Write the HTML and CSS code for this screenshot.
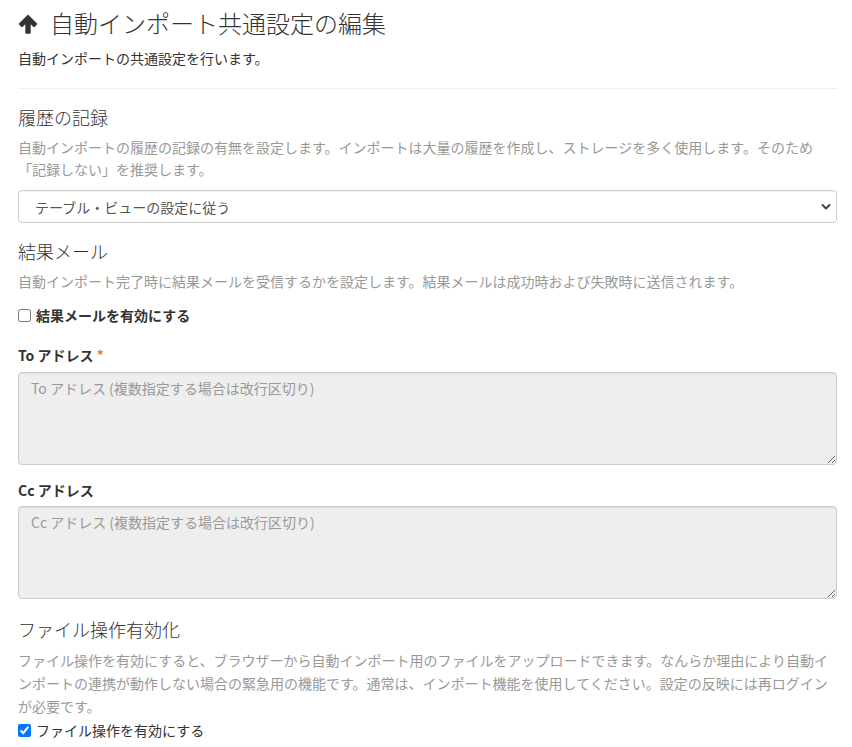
FILE: index.html
```html
<!DOCTYPE html>
<html lang="ja">
<head>
<meta charset="utf-8">
<title>自動インポート共通設定の編集</title>
<link rel="stylesheet" href="styles.css">
</head>
<body>
<div class="page">
  <h1 class="title">
    <svg class="title-icon" width="20" height="20" viewBox="0 0 20 20" aria-hidden="true">
      <path d="M10 1.5 L18.5 10 L16 12.5 L12 8.5 V19 H8 V8.5 L4 12.5 L1.5 10 Z" fill="#333" stroke="#333" stroke-width="1.4" stroke-linejoin="round"/>
    </svg>
    <span>自動インポート共通設定の編集</span>
  </h1>
  <p class="subtitle">自動インポートの共通設定を行います。</p>
  <hr class="divider">

  <h2 class="section-title">履歴の記録</h2>
  <p class="help help-history">自動インポートの履歴の記録の有無を設定します。インポートは大量の履歴を作成し、ストレージを多く使用します。そのため「記録しない」を推奨します。</p>
  <div class="select-wrap">
    <select class="select">
      <option>テーブル・ビューの設定に従う</option>
      <option>記録する</option>
      <option>記録しない</option>
    </select>
    <svg class="select-arrow" width="10" height="8" viewBox="0 0 10 8" aria-hidden="true">
      <path d="M1.5 2 L5 5.5 L8.5 2" fill="none" stroke="#444" stroke-width="2" stroke-linecap="round" stroke-linejoin="round"/>
    </svg>
  </div>

  <h2 class="section-title section-mail">結果メール</h2>
  <p class="help help-mail">自動インポート完了時に結果メールを受信するかを設定します。結果メールは成功時および失敗時に送信されます。</p>
  <label class="check check-mail"><input type="checkbox" class="check-box"><span class="check-strong">結果メールを有効にする</span></label>

  <label class="field-label label-to">To アドレス <span class="required">*</span></label>
  <textarea class="textarea textarea-to" placeholder="To アドレス (複数指定する場合は改行区切り)" disabled></textarea>

  <label class="field-label label-cc">Cc アドレス</label>
  <textarea class="textarea textarea-cc" placeholder="Cc アドレス (複数指定する場合は改行区切り)" disabled></textarea>

  <h2 class="section-title section-file">ファイル操作有効化</h2>
  <p class="help help-file">ファイル操作を有効にすると、ブラウザーから自動インポート用のファイルをアップロードできます。なんらか理由により自動インポートの連携が動作しない場合の緊急用の機能です。通常は、インポート機能を使用してください。設定の反映には再ログインが必要です。</p>
  <label class="check check-file"><input type="checkbox" class="check-box" checked><span>ファイル操作を有効にする</span></label>
</div>
</body>
</html>
```

FILE: styles.css
```css
html, body {
  margin: 0;
  padding: 0;
  background: #fff;
}

body {
  font-family: "Noto Sans CJK JP", "Noto Sans", "Liberation Sans", sans-serif;
  font-size: 14px;
  color: #333;
}

.page {
  display: flex;
  flex-direction: column;
  padding: 6px 15px 0 18px;
}

.title {
  display: flex;
  align-items: center;
  gap: 12px;
  margin: 0;
  font-size: 24px;
  font-weight: 300;
  line-height: 34px;
  color: #333;
}

.title-icon {
  flex: none;
  margin-top: 2px;
}

.subtitle {
  margin: 8px 0 0;
  line-height: 20px;
  color: #333;
}

.divider {
  margin: 20px 0 0;
  border: 0;
  border-top: 1px solid #eee;
  height: 0;
}

.section-title {
  margin: 15px 0 0;
  font-size: 18px;
  font-weight: 300;
  line-height: 26px;
  color: #333;
}

.section-mail {
  margin-top: 15px;
}

.section-file {
  margin-top: 17px;
}

.help {
  margin: 6px 0 0;
  line-height: 22px;
  color: #999;
}

.help-file {
  margin-top: 7px;
  line-height: 23px;
}

.select-wrap {
  position: relative;
  margin-top: 10px;
}

.select {
  display: block;
  width: 100%;
  height: 33px;
  margin: 0;
  padding: 0 30px 0 16px;
  border: 1px solid #ccc;
  border-radius: 4px;
  background: #fff;
  font-family: inherit;
  font-size: 14px;
  color: #555;
  -webkit-appearance: none;
  appearance: none;
  box-shadow: inset 0 1px 1px rgba(0, 0, 0, 0.04);
}

.select-arrow {
  position: absolute;
  right: 6px;
  top: 13px;
  pointer-events: none;
}

.check {
  display: flex;
  align-items: center;
  line-height: 20px;
  color: #333;
}

.check-box {
  width: 13px;
  height: 13px;
  margin: 0 5px 0 0;
  flex: none;
}

.check-strong {
  font-weight: bold;
}

.check-mail {
  margin-top: 13px;
}

.check-file {
  margin-top: 2px;
}

.field-label {
  display: block;
  font-weight: bold;
  line-height: 20px;
  color: #333;
}

.label-to {
  margin-top: 20px;
}

.label-cc {
  margin-top: 15px;
}

.required {
  color: #f47a20;
}

.textarea {
  display: block;
  box-sizing: border-box;
  width: 100%;
  margin: 7px 0 0;
  padding: 5px 12px;
  border: 1px solid #ccc;
  border-radius: 4px;
  background: #eee;
  font-family: inherit;
  font-size: 14px;
  line-height: 20px;
  color: #555;
  resize: vertical;
  box-shadow: inset 0 1px 1px rgba(0, 0, 0, 0.075);
}

.textarea-to {
  height: 93px;
}

.textarea-cc {
  height: 93px;
  margin-top: 6px;
}

.textarea::placeholder {
  color: #999;
  opacity: 1;
}
```
